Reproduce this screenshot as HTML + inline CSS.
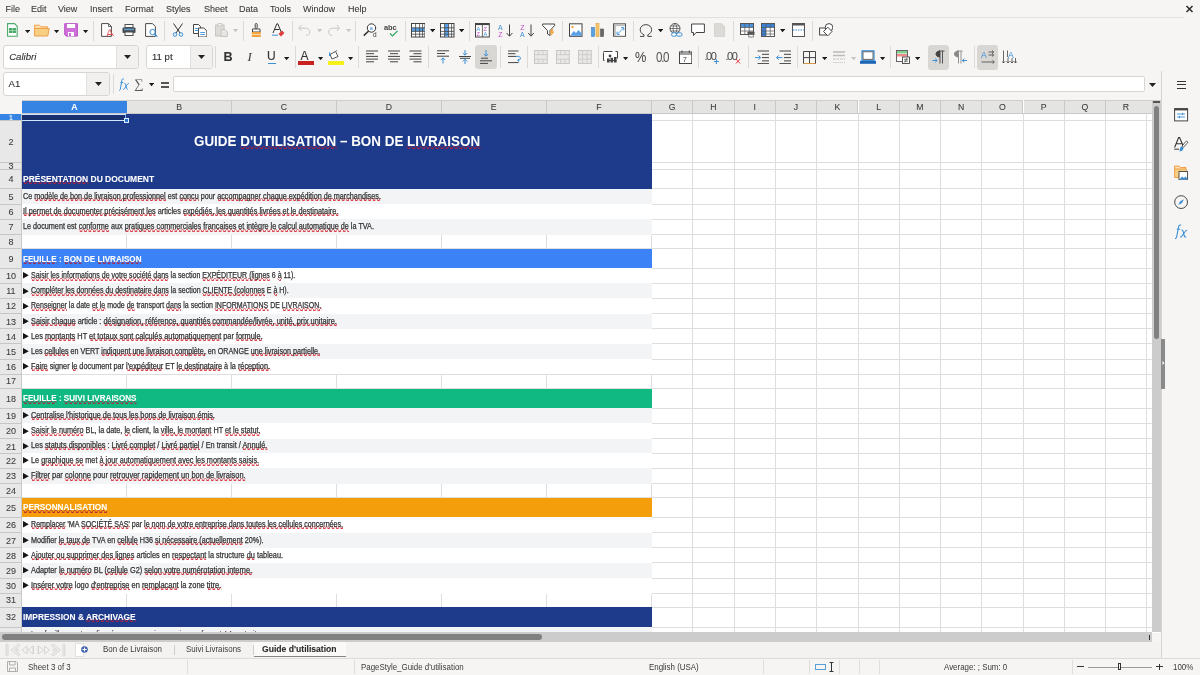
<!DOCTYPE html><html><head><meta charset="utf-8"><style>
*{margin:0;padding:0;box-sizing:border-box}
html,body{width:1200px;height:675px;overflow:hidden;background:#f6f5f4;font-family:"Liberation Sans", sans-serif;position:relative;-webkit-text-stroke-width:0.08px}
.ui{position:absolute;font-size:8.8px;color:#3a3a3a;line-height:12px;white-space:nowrap;transform:scaleX(0.9);transform-origin:0 0;-webkit-text-stroke-width:0}
.a{position:absolute}
.t{position:absolute;white-space:nowrap;transform-origin:0 50%}
.sp{background-image:linear-gradient(50.2deg,transparent 1.42px,rgba(215,45,55,.8) 1.42px,rgba(215,45,55,.8) 2.42px,transparent 2.42px),linear-gradient(129.8deg,transparent 3.34px,rgba(215,45,55,.8) 3.34px,rgba(215,45,55,.8) 4.34px,transparent 4.34px);background-size:5px 3px;background-position:0 100%;background-repeat:repeat-x;padding-bottom:0.3px}
.sec .sp,#title .sp{background-image:linear-gradient(50.2deg,transparent 1.42px,rgba(180,30,60,.75) 1.42px,rgba(180,30,60,.75) 2.42px,transparent 2.42px),linear-gradient(129.8deg,transparent 3.34px,rgba(180,30,60,.75) 3.34px,rgba(180,30,60,.75) 4.34px,transparent 4.34px)}
#root{position:absolute;left:0;top:0;width:1200px;height:675px;filter:blur(0.4px);will-change:transform}
.menu{position:absolute;top:2px;font-size:9px;color:#3a3a3a;line-height:14px}
.sep{position:absolute;width:1px;background:#dcdad7}
.hd{position:absolute;top:100.2px;height:13.6px;background:#e4e4e3;border-right:1px solid #c8c8c8;border-top:1px solid #cdcdcc;font-size:8.7px;color:#3c3c3c;text-align:center;line-height:13.4px}
.rhd{position:absolute;left:0;width:21.9px;background:#e8e8e8;font-size:9px;color:#3c3c3c;text-align:center}
</style></head><body><div id="root">
<div class="menu" style="left:5.6px">File</div>
<div class="menu" style="left:31px">Edit</div>
<div class="menu" style="left:58px">View</div>
<div class="menu" style="left:90px">Insert</div>
<div class="menu" style="left:125px">Format</div>
<div class="menu" style="left:166px">Styles</div>
<div class="menu" style="left:204px">Sheet</div>
<div class="menu" style="left:239px">Data</div>
<div class="menu" style="left:270px">Tools</div>
<div class="menu" style="left:303px">Window</div>
<div class="menu" style="left:348px">Help</div>
<div class="a" style="left:0;top:16.5px;width:1184px;height:1px;background:#e3e1de"></div>
<svg class="a" style="left:1185px;top:4.5px" width="9" height="8" viewBox="0 0 9 8"><path d="M1.5 1L7.5 7M7.5 1L1.5 7" stroke="#2a2a2a" stroke-width="1.5"/></svg>
<div class="a" style="left:0;top:96px;width:1161.4px;height:536.5px;background:#ffffff"></div>
<div class="a" style="left:0;top:96px;width:1161.4px;height:4.2px;background:#f6f5f4"></div>
<div class="a" style="left:0;top:100.2px;width:21.9px;height:13.6px;background:#f6f5f4"></div>
<div class="a" style="left:21.40px;top:113.8px;width:1px;height:518.7px;background:#dedede"></div>
<div class="a" style="left:126.30px;top:113.8px;width:1px;height:518.7px;background:#dedede"></div>
<div class="a" style="left:231.10px;top:113.8px;width:1px;height:518.7px;background:#dedede"></div>
<div class="a" style="left:335.90px;top:113.8px;width:1px;height:518.7px;background:#dedede"></div>
<div class="a" style="left:440.80px;top:113.8px;width:1px;height:518.7px;background:#dedede"></div>
<div class="a" style="left:545.70px;top:113.8px;width:1px;height:518.7px;background:#dedede"></div>
<div class="a" style="left:650.90px;top:113.8px;width:1px;height:518.7px;background:#dedede"></div>
<div class="a" style="left:692.30px;top:113.8px;width:1px;height:518.7px;background:#dedede"></div>
<div class="a" style="left:733.60px;top:113.8px;width:1px;height:518.7px;background:#dedede"></div>
<div class="a" style="left:774.90px;top:113.8px;width:1px;height:518.7px;background:#dedede"></div>
<div class="a" style="left:816.20px;top:113.8px;width:1px;height:518.7px;background:#dedede"></div>
<div class="a" style="left:857.50px;top:113.8px;width:1px;height:518.7px;background:#dedede"></div>
<div class="a" style="left:898.80px;top:113.8px;width:1px;height:518.7px;background:#dedede"></div>
<div class="a" style="left:940.00px;top:113.8px;width:1px;height:518.7px;background:#dedede"></div>
<div class="a" style="left:981.30px;top:113.8px;width:1px;height:518.7px;background:#dedede"></div>
<div class="a" style="left:1022.50px;top:113.8px;width:1px;height:518.7px;background:#dedede"></div>
<div class="a" style="left:1063.70px;top:113.8px;width:1px;height:518.7px;background:#dedede"></div>
<div class="a" style="left:1105.00px;top:113.8px;width:1px;height:518.7px;background:#dedede"></div>
<div class="a" style="left:1146.00px;top:113.8px;width:1px;height:518.7px;background:#dedede"></div>
<div class="a" style="left:21.9px;top:120.10px;width:1130.1px;height:1px;background:#dedede"></div>
<div class="a" style="left:21.9px;top:162.10px;width:1130.1px;height:1px;background:#dedede"></div>
<div class="a" style="left:21.9px;top:168.80px;width:1130.1px;height:1px;background:#dedede"></div>
<div class="a" style="left:21.9px;top:188.40px;width:1130.1px;height:1px;background:#dedede"></div>
<div class="a" style="left:21.9px;top:203.70px;width:1130.1px;height:1px;background:#dedede"></div>
<div class="a" style="left:21.9px;top:218.80px;width:1130.1px;height:1px;background:#dedede"></div>
<div class="a" style="left:21.9px;top:234.20px;width:1130.1px;height:1px;background:#dedede"></div>
<div class="a" style="left:21.9px;top:248.20px;width:1130.1px;height:1px;background:#dedede"></div>
<div class="a" style="left:21.9px;top:267.80px;width:1130.1px;height:1px;background:#dedede"></div>
<div class="a" style="left:21.9px;top:282.90px;width:1130.1px;height:1px;background:#dedede"></div>
<div class="a" style="left:21.9px;top:297.90px;width:1130.1px;height:1px;background:#dedede"></div>
<div class="a" style="left:21.9px;top:313.00px;width:1130.1px;height:1px;background:#dedede"></div>
<div class="a" style="left:21.9px;top:328.00px;width:1130.1px;height:1px;background:#dedede"></div>
<div class="a" style="left:21.9px;top:343.30px;width:1130.1px;height:1px;background:#dedede"></div>
<div class="a" style="left:21.9px;top:358.60px;width:1130.1px;height:1px;background:#dedede"></div>
<div class="a" style="left:21.9px;top:373.60px;width:1130.1px;height:1px;background:#dedede"></div>
<div class="a" style="left:21.9px;top:388.00px;width:1130.1px;height:1px;background:#dedede"></div>
<div class="a" style="left:21.9px;top:407.70px;width:1130.1px;height:1px;background:#dedede"></div>
<div class="a" style="left:21.9px;top:422.80px;width:1130.1px;height:1px;background:#dedede"></div>
<div class="a" style="left:21.9px;top:438.00px;width:1130.1px;height:1px;background:#dedede"></div>
<div class="a" style="left:21.9px;top:452.80px;width:1130.1px;height:1px;background:#dedede"></div>
<div class="a" style="left:21.9px;top:467.90px;width:1130.1px;height:1px;background:#dedede"></div>
<div class="a" style="left:21.9px;top:483.10px;width:1130.1px;height:1px;background:#dedede"></div>
<div class="a" style="left:21.9px;top:497.00px;width:1130.1px;height:1px;background:#dedede"></div>
<div class="a" style="left:21.9px;top:516.70px;width:1130.1px;height:1px;background:#dedede"></div>
<div class="a" style="left:21.9px;top:532.00px;width:1130.1px;height:1px;background:#dedede"></div>
<div class="a" style="left:21.9px;top:547.10px;width:1130.1px;height:1px;background:#dedede"></div>
<div class="a" style="left:21.9px;top:562.30px;width:1130.1px;height:1px;background:#dedede"></div>
<div class="a" style="left:21.9px;top:577.50px;width:1130.1px;height:1px;background:#dedede"></div>
<div class="a" style="left:21.9px;top:592.70px;width:1130.1px;height:1px;background:#dedede"></div>
<div class="a" style="left:21.9px;top:606.90px;width:1130.1px;height:1px;background:#dedede"></div>
<div class="a" style="left:21.9px;top:626.70px;width:1130.1px;height:1px;background:#dedede"></div>
<div class="a" style="left:21.9px;top:641.80px;width:1130.1px;height:1px;background:#dedede"></div>
<div class="a" style="left:21.9px;top:113.60px;width:630.10px;height:7.30px;background:#1e3a8a"></div>
<div class="a" style="left:21.9px;top:120.60px;width:630.10px;height:42.30px;background:#1e3a8a"></div>
<div class="a" style="left:21.9px;top:162.60px;width:630.10px;height:7.00px;background:#1e3a8a"></div>
<div class="a" style="left:21.9px;top:169.30px;width:630.10px;height:19.90px;background:#1e3a8a"></div>
<div class="a" style="left:21.9px;top:248.70px;width:630.10px;height:19.90px;background:#3b82f6"></div>
<div class="a" style="left:21.9px;top:388.50px;width:630.10px;height:20.00px;background:#10b981"></div>
<div class="a" style="left:21.9px;top:497.50px;width:630.10px;height:20.00px;background:#f59e0b"></div>
<div class="a" style="left:21.9px;top:607.40px;width:630.10px;height:20.10px;background:#1e3a8a"></div>
<div class="a" style="left:21.9px;top:188.90px;width:630.10px;height:15.60px;background:#f3f4f6"></div>
<div class="a" style="left:21.9px;top:204.20px;width:630.10px;height:15.40px;background:#ffffff"></div>
<div class="a" style="left:21.9px;top:219.30px;width:630.10px;height:15.70px;background:#f3f4f6"></div>
<div class="a" style="left:21.9px;top:268.30px;width:630.10px;height:15.40px;background:#ffffff"></div>
<div class="a" style="left:21.9px;top:283.40px;width:630.10px;height:15.30px;background:#f3f4f6"></div>
<div class="a" style="left:21.9px;top:298.40px;width:630.10px;height:15.40px;background:#ffffff"></div>
<div class="a" style="left:21.9px;top:313.50px;width:630.10px;height:15.30px;background:#f3f4f6"></div>
<div class="a" style="left:21.9px;top:328.50px;width:630.10px;height:15.60px;background:#ffffff"></div>
<div class="a" style="left:21.9px;top:343.80px;width:630.10px;height:15.60px;background:#f3f4f6"></div>
<div class="a" style="left:21.9px;top:359.10px;width:630.10px;height:15.30px;background:#ffffff"></div>
<div class="a" style="left:21.9px;top:408.20px;width:630.10px;height:15.40px;background:#f3f4f6"></div>
<div class="a" style="left:21.9px;top:423.30px;width:630.10px;height:15.50px;background:#ffffff"></div>
<div class="a" style="left:21.9px;top:438.50px;width:630.10px;height:15.10px;background:#f3f4f6"></div>
<div class="a" style="left:21.9px;top:453.30px;width:630.10px;height:15.40px;background:#ffffff"></div>
<div class="a" style="left:21.9px;top:468.40px;width:630.10px;height:15.50px;background:#f3f4f6"></div>
<div class="a" style="left:21.9px;top:517.20px;width:630.10px;height:15.60px;background:#ffffff"></div>
<div class="a" style="left:21.9px;top:532.50px;width:630.10px;height:15.40px;background:#f3f4f6"></div>
<div class="a" style="left:21.9px;top:547.60px;width:630.10px;height:15.50px;background:#ffffff"></div>
<div class="a" style="left:21.9px;top:562.80px;width:630.10px;height:15.50px;background:#f3f4f6"></div>
<div class="a" style="left:21.9px;top:578.00px;width:630.10px;height:15.50px;background:#ffffff"></div>
<div class="a" style="left:21.9px;top:627.20px;width:630.10px;height:15.40px;background:#f3f4f6"></div>
<div class="hd" style="left:21.9px;width:104.90px;background:#3584e4;color:#fff;font-weight:bold;border-right:none">A</div>
<div class="hd" style="left:127.30px;width:104.80px">B</div>
<div class="hd" style="left:232.10px;width:104.80px">C</div>
<div class="hd" style="left:336.90px;width:104.90px">D</div>
<div class="hd" style="left:441.80px;width:104.90px">E</div>
<div class="hd" style="left:546.70px;width:105.20px">F</div>
<div class="hd" style="left:651.90px;width:41.40px">G</div>
<div class="hd" style="left:693.30px;width:41.30px">H</div>
<div class="hd" style="left:734.60px;width:41.30px">I</div>
<div class="hd" style="left:775.90px;width:41.30px">J</div>
<div class="hd" style="left:817.20px;width:41.30px">K</div>
<div class="hd" style="left:858.50px;width:41.30px">L</div>
<div class="hd" style="left:899.80px;width:41.20px">M</div>
<div class="hd" style="left:941.00px;width:41.30px">N</div>
<div class="hd" style="left:982.30px;width:41.20px">O</div>
<div class="hd" style="left:1023.50px;width:41.20px">P</div>
<div class="hd" style="left:1064.70px;width:41.30px">Q</div>
<div class="hd" style="left:1106.00px;width:41.00px">R</div>
<div class="hd" style="left:1146px;width:6px;border-right:none"></div>
<div class="a" style="left:21.9px;top:113.3px;width:1130px;height:0.6px;background:#c8c8c8"></div>
<div class="rhd" style="top:113.60px;height:7.00px;background:#3584e4;color:#fff;line-height:7.0px;font-size:7px;border-bottom:none">1</div>
<div class="rhd" style="top:120.60px;height:42.00px;line-height:43.20px">2</div>
<div class="a" style="left:0;top:120.10px;width:21.9px;height:1px;background:#c6c6c6"></div>
<div class="rhd" style="top:162.60px;height:6.70px;line-height:7.90px">3</div>
<div class="a" style="left:0;top:162.10px;width:21.9px;height:1px;background:#c6c6c6"></div>
<div class="rhd" style="top:169.30px;height:19.60px;line-height:20.80px">4</div>
<div class="a" style="left:0;top:168.80px;width:21.9px;height:1px;background:#c6c6c6"></div>
<div class="rhd" style="top:188.90px;height:15.30px;line-height:16.50px">5</div>
<div class="a" style="left:0;top:188.40px;width:21.9px;height:1px;background:#c6c6c6"></div>
<div class="rhd" style="top:204.20px;height:15.10px;line-height:16.30px">6</div>
<div class="a" style="left:0;top:203.70px;width:21.9px;height:1px;background:#c6c6c6"></div>
<div class="rhd" style="top:219.30px;height:15.40px;line-height:16.60px">7</div>
<div class="a" style="left:0;top:218.80px;width:21.9px;height:1px;background:#c6c6c6"></div>
<div class="rhd" style="top:234.70px;height:14.00px;line-height:15.20px">8</div>
<div class="a" style="left:0;top:234.20px;width:21.9px;height:1px;background:#c6c6c6"></div>
<div class="rhd" style="top:248.70px;height:19.60px;line-height:20.80px">9</div>
<div class="a" style="left:0;top:248.20px;width:21.9px;height:1px;background:#c6c6c6"></div>
<div class="rhd" style="top:268.30px;height:15.10px;line-height:16.30px">10</div>
<div class="a" style="left:0;top:267.80px;width:21.9px;height:1px;background:#c6c6c6"></div>
<div class="rhd" style="top:283.40px;height:15.00px;line-height:16.20px">11</div>
<div class="a" style="left:0;top:282.90px;width:21.9px;height:1px;background:#c6c6c6"></div>
<div class="rhd" style="top:298.40px;height:15.10px;line-height:16.30px">12</div>
<div class="a" style="left:0;top:297.90px;width:21.9px;height:1px;background:#c6c6c6"></div>
<div class="rhd" style="top:313.50px;height:15.00px;line-height:16.20px">13</div>
<div class="a" style="left:0;top:313.00px;width:21.9px;height:1px;background:#c6c6c6"></div>
<div class="rhd" style="top:328.50px;height:15.30px;line-height:16.50px">14</div>
<div class="a" style="left:0;top:328.00px;width:21.9px;height:1px;background:#c6c6c6"></div>
<div class="rhd" style="top:343.80px;height:15.30px;line-height:16.50px">15</div>
<div class="a" style="left:0;top:343.30px;width:21.9px;height:1px;background:#c6c6c6"></div>
<div class="rhd" style="top:359.10px;height:15.00px;line-height:16.20px">16</div>
<div class="a" style="left:0;top:358.60px;width:21.9px;height:1px;background:#c6c6c6"></div>
<div class="rhd" style="top:374.10px;height:14.40px;line-height:15.60px">17</div>
<div class="a" style="left:0;top:373.60px;width:21.9px;height:1px;background:#c6c6c6"></div>
<div class="rhd" style="top:388.50px;height:19.70px;line-height:20.90px">18</div>
<div class="a" style="left:0;top:388.00px;width:21.9px;height:1px;background:#c6c6c6"></div>
<div class="rhd" style="top:408.20px;height:15.10px;line-height:16.30px">19</div>
<div class="a" style="left:0;top:407.70px;width:21.9px;height:1px;background:#c6c6c6"></div>
<div class="rhd" style="top:423.30px;height:15.20px;line-height:16.40px">20</div>
<div class="a" style="left:0;top:422.80px;width:21.9px;height:1px;background:#c6c6c6"></div>
<div class="rhd" style="top:438.50px;height:14.80px;line-height:16.00px">21</div>
<div class="a" style="left:0;top:438.00px;width:21.9px;height:1px;background:#c6c6c6"></div>
<div class="rhd" style="top:453.30px;height:15.10px;line-height:16.30px">22</div>
<div class="a" style="left:0;top:452.80px;width:21.9px;height:1px;background:#c6c6c6"></div>
<div class="rhd" style="top:468.40px;height:15.20px;line-height:16.40px">23</div>
<div class="a" style="left:0;top:467.90px;width:21.9px;height:1px;background:#c6c6c6"></div>
<div class="rhd" style="top:483.60px;height:13.90px;line-height:15.10px">24</div>
<div class="a" style="left:0;top:483.10px;width:21.9px;height:1px;background:#c6c6c6"></div>
<div class="rhd" style="top:497.50px;height:19.70px;line-height:20.90px">25</div>
<div class="a" style="left:0;top:497.00px;width:21.9px;height:1px;background:#c6c6c6"></div>
<div class="rhd" style="top:517.20px;height:15.30px;line-height:16.50px">26</div>
<div class="a" style="left:0;top:516.70px;width:21.9px;height:1px;background:#c6c6c6"></div>
<div class="rhd" style="top:532.50px;height:15.10px;line-height:16.30px">27</div>
<div class="a" style="left:0;top:532.00px;width:21.9px;height:1px;background:#c6c6c6"></div>
<div class="rhd" style="top:547.60px;height:15.20px;line-height:16.40px">28</div>
<div class="a" style="left:0;top:547.10px;width:21.9px;height:1px;background:#c6c6c6"></div>
<div class="rhd" style="top:562.80px;height:15.20px;line-height:16.40px">29</div>
<div class="a" style="left:0;top:562.30px;width:21.9px;height:1px;background:#c6c6c6"></div>
<div class="rhd" style="top:578.00px;height:15.20px;line-height:16.40px">30</div>
<div class="a" style="left:0;top:577.50px;width:21.9px;height:1px;background:#c6c6c6"></div>
<div class="rhd" style="top:593.20px;height:14.20px;line-height:15.40px">31</div>
<div class="a" style="left:0;top:592.70px;width:21.9px;height:1px;background:#c6c6c6"></div>
<div class="rhd" style="top:607.40px;height:19.80px;line-height:21.00px">32</div>
<div class="a" style="left:0;top:606.90px;width:21.9px;height:1px;background:#c6c6c6"></div>
<div class="rhd" style="top:627.20px;height:5.30px;line-height:16.30px">33</div>
<div class="a" style="left:0;top:626.70px;width:21.9px;height:1px;background:#c6c6c6"></div>
<div class="a" style="left:21.4px;top:113.8px;width:0.8px;height:518.7px;background:#c8c8c8"></div>
<div class="a" style="left:21.9px;top:113.9px;width:104px;height:7.4px;border:1.1px solid #cfe6ff;border-bottom-width:1.8px;border-right-color:#7fb0ea"></div>
<div class="a" style="left:21.9px;top:115px;width:103px;height:4.5px;background:#19306f"></div>
<div class="a" style="left:124.2px;top:118.2px;width:4.8px;height:5px;background:#2f6fd0;border:1.2px solid #dcefff"></div>
<div class="t" id="title" style="left:193.9px;top:120.6px;height:42.0px;line-height:41.3px;font-size:14.2px;font-weight:bold;color:#fff;-webkit-text-stroke-width:0;transform:scaleX(0.9452)">GUIDE <span class="sp">D&#39;UTILISATION</span> – BON DE <span class="sp">LIVRAISON</span></div>
<div class="t sec" id="s4" style="left:22.9px;top:170.10px;height:19.60px;line-height:19.60px;font-size:8.7px;font-weight:bold;color:#fff;transform:scaleX(0.9757)"><span class="sp">PRÉSENTATION</span> DU DOCUMENT</div>
<div class="t sec" id="s9" style="left:22.9px;top:249.50px;height:19.60px;line-height:19.60px;font-size:8.7px;font-weight:bold;color:#fff;transform:scaleX(0.9296)"><span class="sp">FEUILLE</span> : <span class="sp">BON</span> DE <span class="sp">LIVRAISON</span></div>
<div class="t sec" id="s18" style="left:22.7px;top:389.30px;height:19.70px;line-height:19.70px;font-size:8.7px;font-weight:bold;color:#fff;transform:scaleX(0.9293)"><span class="sp">FEUILLE</span> : <span class="sp">SUIVI LIVRAISONS</span></div>
<div class="t sec" id="s25" style="left:22.9px;top:498.30px;height:19.70px;line-height:19.70px;font-size:8.7px;font-weight:bold;color:#fff;transform:scaleX(0.9435)"><span class="sp">PERSONNALISATION</span></div>
<div class="t sec" id="s32" style="left:22.9px;top:608.20px;height:19.80px;line-height:19.80px;font-size:8.7px;font-weight:bold;color:#fff;transform:scaleX(0.9639)">IMPRESSION &amp; <span class="sp">ARCHIVAGE</span></div>
<div class="t" id="r5" style="left:23.0px;top:188.90px;height:15.30px;line-height:15.30px;font-size:8.2px;color:#333333;-webkit-text-stroke-width:0.25px;transform:scaleX(0.8832)">Ce <span class="sp">modèle de bon de livraison professionnel</span> est <span class="sp">concu</span> pour <span class="sp">accompagner chaque expédition de marchandises.</span></div>
<div class="t" id="r6" style="left:23.0px;top:204.20px;height:15.10px;line-height:15.10px;font-size:8.2px;color:#333333;-webkit-text-stroke-width:0.25px;transform:scaleX(0.894)"><span class="sp">Il permet de documenter précisément les</span> articles <span class="sp">expédiés, les quantités livrées et le destinataire.</span></div>
<div class="t" id="r7" style="left:23.0px;top:219.30px;height:15.40px;line-height:15.40px;font-size:8.2px;color:#333333;-webkit-text-stroke-width:0.25px;transform:scaleX(0.886)">Le document est <span class="sp">conforme</span> aux <span class="sp">pratiques commerciales francaises et intègre le calcul automatique de</span> la TVA.</div>
<svg class="a" style="left:22.8px;top:272.45px" width="6" height="6.4" viewBox="0 0 6 6.4"><path d="M0 0L5.8 3.2L0 6.4Z" fill="#151515"/></svg>
<div class="t" id="r10" style="left:30.6px;top:268.30px;height:15.10px;line-height:15.10px;font-size:8.2px;color:#333333;-webkit-text-stroke-width:0.25px;transform:scaleX(0.8591)"><span class="sp">Saisir les informations de votre société dans</span> la section <span class="sp">EXPÉDITEUR (lignes</span> 6 <span class="sp">à</span> 11).</div>
<svg class="a" style="left:22.8px;top:287.50px" width="6" height="6.4" viewBox="0 0 6 6.4"><path d="M0 0L5.8 3.2L0 6.4Z" fill="#151515"/></svg>
<div class="t" id="r11" style="left:30.6px;top:283.40px;height:15.00px;line-height:15.00px;font-size:8.2px;color:#333333;-webkit-text-stroke-width:0.25px;transform:scaleX(0.8604)"><span class="sp">Compléter les données du destinataire dans</span> la section <span class="sp">CLIENTE (colonnes</span> E <span class="sp">à</span> H).</div>
<svg class="a" style="left:22.8px;top:302.55px" width="6" height="6.4" viewBox="0 0 6 6.4"><path d="M0 0L5.8 3.2L0 6.4Z" fill="#151515"/></svg>
<div class="t" id="r12" style="left:30.6px;top:298.40px;height:15.10px;line-height:15.10px;font-size:8.2px;color:#333333;-webkit-text-stroke-width:0.25px;transform:scaleX(0.8576)"><span class="sp">Renseigner</span> la date <span class="sp">et le</span> mode <span class="sp">de</span> transport <span class="sp">dans</span> la section <span class="sp">INFORMATIONS</span> DE <span class="sp">LIVRAISON.</span></div>
<svg class="a" style="left:22.8px;top:317.60px" width="6" height="6.4" viewBox="0 0 6 6.4"><path d="M0 0L5.8 3.2L0 6.4Z" fill="#151515"/></svg>
<div class="t" id="r13" style="left:30.6px;top:313.50px;height:15.00px;line-height:15.00px;font-size:8.2px;color:#333333;-webkit-text-stroke-width:0.25px;transform:scaleX(0.8995)"><span class="sp">Saisir chaque</span> article : <span class="sp">désignation, référence, quantités commandée/livrée, unité, prix unitaire.</span></div>
<svg class="a" style="left:22.8px;top:332.75px" width="6" height="6.4" viewBox="0 0 6 6.4"><path d="M0 0L5.8 3.2L0 6.4Z" fill="#151515"/></svg>
<div class="t" id="r14" style="left:30.6px;top:328.50px;height:15.30px;line-height:15.30px;font-size:8.2px;color:#333333;-webkit-text-stroke-width:0.25px;transform:scaleX(0.9011)">Les <span class="sp">montants</span> HT <span class="sp">et totaux sont calculés automatiquement</span> par <span class="sp">formule.</span></div>
<svg class="a" style="left:22.8px;top:348.05px" width="6" height="6.4" viewBox="0 0 6 6.4"><path d="M0 0L5.8 3.2L0 6.4Z" fill="#151515"/></svg>
<div class="t" id="r15" style="left:30.6px;top:343.80px;height:15.30px;line-height:15.30px;font-size:8.2px;color:#333333;-webkit-text-stroke-width:0.25px;transform:scaleX(0.8756)">Les <span class="sp">cellules</span> en VERT <span class="sp">indiquent une livraison complète,</span> en ORANGE <span class="sp">une livraison partielle.</span></div>
<svg class="a" style="left:22.8px;top:363.20px" width="6" height="6.4" viewBox="0 0 6 6.4"><path d="M0 0L5.8 3.2L0 6.4Z" fill="#151515"/></svg>
<div class="t" id="r16" style="left:30.6px;top:359.10px;height:15.00px;line-height:15.00px;font-size:8.2px;color:#333333;-webkit-text-stroke-width:0.25px;transform:scaleX(0.8927)"><span class="sp">Faire</span> signer <span class="sp">le</span> document par <span class="sp">l&#39;expéditeur</span> ET <span class="sp">le destinataire</span> à la <span class="sp">réception.</span></div>
<svg class="a" style="left:22.8px;top:412.35px" width="6" height="6.4" viewBox="0 0 6 6.4"><path d="M0 0L5.8 3.2L0 6.4Z" fill="#151515"/></svg>
<div class="t" id="r19" style="left:30.6px;top:408.20px;height:15.10px;line-height:15.10px;font-size:8.2px;color:#333333;-webkit-text-stroke-width:0.25px;transform:scaleX(0.8951)"><span class="sp">Centralise l&#39;historique de tous les bons de livraison émis.</span></div>
<svg class="a" style="left:22.8px;top:427.50px" width="6" height="6.4" viewBox="0 0 6 6.4"><path d="M0 0L5.8 3.2L0 6.4Z" fill="#151515"/></svg>
<div class="t" id="r20" style="left:30.6px;top:423.30px;height:15.20px;line-height:15.20px;font-size:8.2px;color:#333333;-webkit-text-stroke-width:0.25px;transform:scaleX(0.8886)"><span class="sp">Saisir le numéro</span> BL, la date, <span class="sp">le</span> client, la <span class="sp">ville, le montant</span> HT <span class="sp">et le statut.</span></div>
<svg class="a" style="left:22.8px;top:442.50px" width="6" height="6.4" viewBox="0 0 6 6.4"><path d="M0 0L5.8 3.2L0 6.4Z" fill="#151515"/></svg>
<div class="t" id="r21" style="left:30.6px;top:438.50px;height:14.80px;line-height:14.80px;font-size:8.2px;color:#333333;-webkit-text-stroke-width:0.25px;transform:scaleX(0.8985)">Les <span class="sp">statuts disponibles</span> : <span class="sp">Livré complet</span> / <span class="sp">Livré partiel</span> / En transit / <span class="sp">Annulé.</span></div>
<svg class="a" style="left:22.8px;top:457.45px" width="6" height="6.4" viewBox="0 0 6 6.4"><path d="M0 0L5.8 3.2L0 6.4Z" fill="#151515"/></svg>
<div class="t" id="r22" style="left:30.6px;top:453.30px;height:15.10px;line-height:15.10px;font-size:8.2px;color:#333333;-webkit-text-stroke-width:0.25px;transform:scaleX(0.8901)">Le <span class="sp">graphique se</span> met <span class="sp">à jour automatiquement avec les montants saisis.</span></div>
<svg class="a" style="left:22.8px;top:472.60px" width="6" height="6.4" viewBox="0 0 6 6.4"><path d="M0 0L5.8 3.2L0 6.4Z" fill="#151515"/></svg>
<div class="t" id="r23" style="left:30.6px;top:468.40px;height:15.20px;line-height:15.20px;font-size:8.2px;color:#333333;-webkit-text-stroke-width:0.25px;transform:scaleX(0.9085)"><span class="sp">Filtrer</span> par <span class="sp">colonne</span> pour <span class="sp">retrouver rapidement un bon de livraison.</span></div>
<svg class="a" style="left:22.8px;top:521.45px" width="6" height="6.4" viewBox="0 0 6 6.4"><path d="M0 0L5.8 3.2L0 6.4Z" fill="#151515"/></svg>
<div class="t" id="r26" style="left:30.6px;top:517.20px;height:15.30px;line-height:15.30px;font-size:8.2px;color:#333333;-webkit-text-stroke-width:0.25px;transform:scaleX(0.8692)"><span class="sp">Remplacer</span> &#39;MA <span class="sp">SOCIÉTÉ SAS&#39;</span> par <span class="sp">le nom de votre entreprise dans toutes les cellules concernées.</span></div>
<svg class="a" style="left:22.8px;top:536.65px" width="6" height="6.4" viewBox="0 0 6 6.4"><path d="M0 0L5.8 3.2L0 6.4Z" fill="#151515"/></svg>
<div class="t" id="r27" style="left:30.6px;top:532.50px;height:15.10px;line-height:15.10px;font-size:8.2px;color:#333333;-webkit-text-stroke-width:0.25px;transform:scaleX(0.8835)">Modifier <span class="sp">le taux de</span> TVA en <span class="sp">cellule</span> H36 <span class="sp">si nécessaire (actuellement</span> 20%).</div>
<svg class="a" style="left:22.8px;top:551.80px" width="6" height="6.4" viewBox="0 0 6 6.4"><path d="M0 0L5.8 3.2L0 6.4Z" fill="#151515"/></svg>
<div class="t" id="r28" style="left:30.6px;top:547.60px;height:15.20px;line-height:15.20px;font-size:8.2px;color:#333333;-webkit-text-stroke-width:0.25px;transform:scaleX(0.8976)"><span class="sp">Ajouter ou supprimer des lignes</span> articles en <span class="sp">respectant</span> la structure <span class="sp">du</span> tableau.</div>
<svg class="a" style="left:22.8px;top:567.00px" width="6" height="6.4" viewBox="0 0 6 6.4"><path d="M0 0L5.8 3.2L0 6.4Z" fill="#151515"/></svg>
<div class="t" id="r29" style="left:30.6px;top:562.80px;height:15.20px;line-height:15.20px;font-size:8.2px;color:#333333;-webkit-text-stroke-width:0.25px;transform:scaleX(0.9006)">Adapter <span class="sp">le numéro</span> BL <span class="sp">(cellule</span> G2) <span class="sp">selon votre numérotation interne.</span></div>
<svg class="a" style="left:22.8px;top:582.20px" width="6" height="6.4" viewBox="0 0 6 6.4"><path d="M0 0L5.8 3.2L0 6.4Z" fill="#151515"/></svg>
<div class="t" id="r30" style="left:30.6px;top:578.00px;height:15.20px;line-height:15.20px;font-size:8.2px;color:#333333;-webkit-text-stroke-width:0.25px;transform:scaleX(0.9074)"><span class="sp">Insérer votre</span> logo <span class="sp">d&#39;entreprise</span> en <span class="sp">remplacant</span> la zone <span class="sp">titre.</span></div>
<div class="a" style="left:22px;top:627.2px;width:400px;height:4.8px;overflow:hidden"><div class="t" style="left:8.6px;top:0;height:15px;line-height:15px;font-size:8.2px;color:#333;transform:scaleX(0.88)">Les feuilles sont configurées pour une impression au format A4 portrait.</div></div>
<div class="a" style="left:1152px;top:100.2px;width:9.4px;height:531.5px;background:#cccccc"></div>
<div class="a" style="left:1153px;top:101px;width:7px;height:2px;background:#555"></div>
<div class="a" style="left:1153.6px;top:105.6px;width:5.6px;height:233px;background:#808080;border-radius:3px"></div>
<div class="a" style="left:0;top:632.3px;width:1151.5px;height:9.4px;background:#cccccc"></div>
<div class="a" style="left:2px;top:634px;width:539.7px;height:6px;background:#808080;border-radius:3px"></div>
<div class="a" style="left:1149.2px;top:635px;width:1px;height:4.5px;background:#333"></div>
<div class="a" style="left:0;top:641.7px;width:1161.4px;height:16.8px;background:#f3f2f0"></div>
<div class="a" style="left:1161.4px;top:71px;width:38.6px;height:587.5px;background:#f6f5f4"></div>
<div class="a" style="left:1161.2px;top:71px;width:0.8px;height:587.5px;background:#d6d4d1"></div>
<div class="a" style="left:1161px;top:339px;width:4px;height:49.5px;background:#8a8a8a"></div>
<svg class="a" style="left:1161.5px;top:361px" width="3" height="4"><path d="M0.5 0L2.5 2L0.5 4Z" fill="#fff"/></svg>
<svg class="a" style="left:5px;top:643px" width="63" height="14" viewBox="0 0 63 14"><g fill="none" stroke="#d3d1ce" stroke-width="0.9"><rect x="1.2" y="1" width="1.8" height="12" rx="0.9"/><path d="M13.5 1.2L6 7L13.5 12.8L15 11.6L9 7L15 2.4Z"/><circle cx="12.5" cy="7" r="0.9"/><path d="M22 3L17 7L22 11ZM28 3L23 7L28 11ZM28.5 3V11"/><path d="M33.5 3L38.5 7L33.5 11ZM39.5 3L44.5 7L39.5 11ZM33 3V11"/><path d="M48 1.2L55.5 7L48 12.8L46.5 11.6L52.5 7L46.5 2.4Z"/><circle cx="49" cy="7" r="0.9"/><rect x="58" y="1" width="1.8" height="12" rx="0.9"/></g></svg>
<div class="a" style="left:75px;top:643px;width:9.2px;height:14.2px;background:#fff;border:0.5px solid #e3e1de"></div>
<svg class="a" style="left:81.2px;top:645.6px" width="7" height="7" viewBox="0 0 7 7"><circle cx="3.5" cy="3.5" r="3.3" fill="#3f64ad"/><path d="M3.5 1.4V5.6M1.4 3.5H5.6" stroke="#fff" stroke-width="1.1"/></svg>
<div class="ui" style="left:103px;top:643.3px" id="tab1">Bon de Livraison</div>
<div class="a" style="left:174.2px;top:645px;width:0.8px;height:10px;background:#cfcdca"></div>
<div class="ui" style="left:186px;top:643.3px" id="tab2">Suivi Livraisons</div>
<div class="a" style="left:253.4px;top:645px;width:0.8px;height:10px;background:#cfcdca"></div>
<div class="a" style="left:254px;top:641.7px;width:92px;height:16px;background:#faf9f8"></div>
<div class="a" style="left:262px;top:643px;font-size:8.6px;font-weight:bold;color:#2a2a2a;line-height:12px" id="tab3">Guide d&#39;utilisation</div>
<div class="a" style="left:254px;top:655.6px;width:92px;height:1.8px;background:#858585"></div>
<div class="a" style="left:0;top:658.4px;width:1200px;height:0.8px;background:#dcdad7"></div>
<svg class="a" style="left:6.7px;top:661px" width="11" height="11" viewBox="0 0 11 11"><g fill="none" stroke="#b0aeab" stroke-width="1"><path d="M0.5 0.5H9L10.5 2V10.5H0.5Z"/><path d="M2.5 0.5V4H8V0.5M2.5 10.5V7H8.5V10.5"/></g></svg>
<div class="ui" style="left:27.5px;top:661.4px">Sheet 3 of 3</div>
<div class="a" style="left:187.3px;top:660px;width:0.8px;height:14px;background:#e0deda"></div>
<div class="a" style="left:354.4px;top:660px;width:0.8px;height:14px;background:#e0deda"></div>
<div class="a" style="left:762.5px;top:660px;width:0.8px;height:14px;background:#e0deda"></div>
<div class="a" style="left:808.75px;top:660px;width:0.8px;height:14px;background:#e0deda"></div>
<div class="a" style="left:838.75px;top:660px;width:0.8px;height:14px;background:#e0deda"></div>
<div class="a" style="left:858.75px;top:660px;width:0.8px;height:14px;background:#e0deda"></div>
<div class="a" style="left:878.75px;top:660px;width:0.8px;height:14px;background:#e0deda"></div>
<div class="a" style="left:1071.5px;top:660px;width:0.8px;height:14px;background:#e0deda"></div>
<div class="ui" style="left:361px;top:661.4px">PageStyle_Guide d&#39;utilisation</div>
<div class="ui" style="left:648.75px;top:661.4px">English (USA)</div>
<div class="a" style="left:815px;top:663.5px;width:11px;height:6px;border:1px solid #5aa0d8"></div>
<svg class="a" style="left:828.5px;top:661.5px" width="5" height="10"><path d="M0.5 0.5H4.5M2.5 0.5V9.5M0.5 9.5H4.5" stroke="#333" stroke-width="1" fill="none"/></svg>
<div class="ui" style="left:944px;top:661.4px">Average: ; Sum: 0</div>
<div class="a" style="left:1077.3px;top:666.3px;width:6.7px;height:1.2px;background:#333"></div>
<div class="a" style="left:1088px;top:666.5px;width:64px;height:0.8px;background:#9a9a9a"></div>
<div class="a" style="left:1118px;top:663px;width:3.3px;height:7px;border:1px solid #333;background:#f6f5f4"></div>
<div class="a" style="left:1156px;top:666.3px;width:6.7px;height:1.2px;background:#333"></div><div class="a" style="left:1158.75px;top:663.5px;width:1.2px;height:6.7px;background:#333"></div>
<div class="ui" style="left:1173.3px;top:661.4px">100%</div>
<svg class="a" style="left:7.1px;top:23px" width="10.8" height="13.8" viewBox="0 0 10.8 13.8" preserveAspectRatio="none"><path d="M0.6 0.6H7.5L10.2 3.3V13.2H0.6Z" fill="#fff" stroke="#4aa86a" stroke-width="1.1"/><rect x="2" y="5" width="7" height="5" fill="#4aa86a"/><path d="M2 7.5H9M5.5 5V10" stroke="#bfe3c9" stroke-width="0.6"/></svg>
<svg class="a" style="left:24.90px;top:29.90px" width="5.2" height="3.2" viewBox="0 0 5.2 3.2"><path d="M0 0H5.2L2.6 3.2Z" fill="#1a1a1a"/></svg>
<svg class="a" style="left:34.2px;top:24.2px" width="15.8" height="12.6" viewBox="0 0 15.8 12.6" preserveAspectRatio="none"><path d="M0.6 1.2H5.5L7 2.8H13.5V4.5H0.6Z" fill="#fbe0a8" stroke="#eea04a" stroke-width="1"/><path d="M0.6 4.5H15.2L13.8 12H0.6Z" fill="#f8cf82" stroke="#eea04a" stroke-width="1"/></svg>
<svg class="a" style="left:54.40px;top:29.90px" width="5.2" height="3.2" viewBox="0 0 5.2 3.2"><path d="M0 0H5.2L2.6 3.2Z" fill="#1a1a1a"/></svg>
<svg class="a" style="left:64.2px;top:23px" width="14.1" height="13.8" viewBox="0 0 14.1 13.8" preserveAspectRatio="none"><path d="M0.7 0.7H13.4V13.1H2.2L0.7 11.6Z" fill="#cf6fda" stroke="#b84fc8" stroke-width="1"/><rect x="3" y="1" width="8" height="4" fill="#fff"/><rect x="4" y="9" width="6" height="4.2" fill="#fff"/><rect x="5.2" y="10" width="1.6" height="3" fill="#b84fc8"/></svg>
<svg class="a" style="left:83.40px;top:29.90px" width="5.2" height="3.2" viewBox="0 0 5.2 3.2"><path d="M0 0H5.2L2.6 3.2Z" fill="#1a1a1a"/></svg>
<div class="sep" style="left:92.90px;top:21px;height:20px"></div>
<svg class="a" style="left:101px;top:23px" width="13" height="14" viewBox="0 0 13 14" preserveAspectRatio="none"><path d="M0.6 0.6H7.5L10.4 3.5V13.4H0.6Z" fill="#fff" stroke="#4a4a4a" stroke-width="1"/><path d="M7.5 0.6V3.5H10.4" fill="none" stroke="#4a4a4a" stroke-width="0.8"/><path d="M6 13.5C7 9 8.5 7 9 6.5C9.5 8 10 10 12.6 13M7 11.5H12" stroke="#e04040" stroke-width="0.9" fill="none"/></svg>
<svg class="a" style="left:122px;top:24px" width="14" height="12" viewBox="0 0 14 12" preserveAspectRatio="none"><rect x="3" y="0.5" width="8" height="3" fill="#fff" stroke="#505050" stroke-width="1"/><rect x="0.5" y="3.5" width="13" height="5.5" rx="1" fill="#4a4a4a"/><rect x="2" y="4.6" width="10" height="1.6" fill="#5a9fd4"/><rect x="3" y="8" width="8" height="3.5" fill="#fff" stroke="#505050" stroke-width="1"/></svg>
<svg class="a" style="left:145px;top:23px" width="13" height="14" viewBox="0 0 13 14" preserveAspectRatio="none"><path d="M0.6 0.6H7.5L10.4 3.5V13.4H0.6Z" fill="#fff" stroke="#4a4a4a" stroke-width="1"/><circle cx="7.6" cy="9" r="2.7" fill="none" stroke="#3b8fd6" stroke-width="1"/><path d="M9.5 11L12.4 13.6" stroke="#3b8fd6" stroke-width="1.2"/></svg>
<div class="sep" style="left:164.10px;top:21px;height:20px"></div>
<svg class="a" style="left:172px;top:23px" width="12" height="14" viewBox="0 0 12 14" preserveAspectRatio="none"><path d="M1.5 0.5L8 10M10.5 0.5L4 10" stroke="#333" stroke-width="1"/><circle cx="3" cy="11.5" r="1.8" fill="none" stroke="#3b8fd6" stroke-width="1"/><circle cx="9" cy="11.5" r="1.8" fill="none" stroke="#3b8fd6" stroke-width="1"/></svg>
<svg class="a" style="left:192.6px;top:23.5px" width="14.4" height="13.5" viewBox="0 0 14.4 13.5" preserveAspectRatio="none"><path d="M0.5 0.5H5.5L7.5 2.5V9.5H0.5Z" fill="#fff" stroke="#444" stroke-width="1"/><path d="M5.5 4H10.8L13.9 7V13H5.5Z" fill="#fff" stroke="#444" stroke-width="1"/><path d="M2 4.5H5.2M2 6.5H5.2M7.3 8.5H12M7.3 10.5H12" stroke="#3b8fd6" stroke-width="0.9"/></svg>
<svg class="a" style="left:215px;top:23px" width="13" height="14" viewBox="0 0 13 14" preserveAspectRatio="none"><rect x="0.6" y="2" width="8.5" height="11" fill="#dedcd9" stroke="#c6c4c1" stroke-width="1"/><rect x="3" y="0.6" width="3.8" height="2.5" fill="#f0efed" stroke="#c6c4c1" stroke-width="0.8"/><path d="M6 6.5H10L12.4 9V13.4H6Z" fill="#e8e6e3" stroke="#c6c4c1" stroke-width="1"/></svg>
<svg class="a" style="left:233.40px;top:29.40px" width="5.2" height="3.2" viewBox="0 0 5.2 3.2"><path d="M0 0H5.2L2.6 3.2Z" fill="#c6c4c1"/></svg>
<div class="sep" style="left:243.10px;top:21px;height:20px"></div>
<svg class="a" style="left:251px;top:22.5px" width="10.5" height="14.3" viewBox="0 0 10.5 14.3" preserveAspectRatio="none"><rect x="4.2" y="0.5" width="2" height="5" rx="1" fill="none" stroke="#444" stroke-width="1"/><path d="M1.5 6H9V9H1.5Z" fill="#fff" stroke="#444" stroke-width="1"/><rect x="0.8" y="9" width="9" height="5" fill="#f2a33a"/><rect x="0.8" y="11" width="9" height="1" fill="#fff" opacity="0.6"/></svg>
<svg class="a" style="left:272px;top:23px" width="12.5" height="14" viewBox="0 0 12.5 14" preserveAspectRatio="none"><path d="M1 10L4.8 0.8H5.8L9.2 9M2.5 6.5H7.5" fill="none" stroke="#333" stroke-width="1"/><path d="M0 12.2H6" stroke="#3b8fd6" stroke-width="1"/><path d="M6.5 11L10 7.5L12.4 9.9L9 13.4Z" fill="#e03a3a"/></svg>
<div class="sep" style="left:292.10px;top:21px;height:20px"></div>
<svg class="a" style="left:298px;top:24px" width="12.6" height="12" viewBox="0 0 12.6 12" preserveAspectRatio="none"><path d="M3.5 1L0.8 4.2L3.5 7M1 4.2H7.5C10 4.2 11.8 6 11.8 8C11.8 10 10.3 11.3 8 11.5" fill="none" stroke="#c9c7c4" stroke-width="1"/></svg>
<svg class="a" style="left:316.80px;top:29.40px" width="5.2" height="3.2" viewBox="0 0 5.2 3.2"><path d="M0 0H5.2L2.6 3.2Z" fill="#c9c7c4"/></svg>
<svg class="a" style="left:328px;top:24px" width="12" height="12" viewBox="0 0 12 12" preserveAspectRatio="none"><path d="M9 1L11.4 4.2L9 7M11.2 4.2H4.8C2.2 4.2 0.6 6 0.6 8C0.6 10 2 11.3 4.3 11.5" fill="none" stroke="#c9c7c4" stroke-width="1"/></svg>
<svg class="a" style="left:346.15px;top:29.40px" width="5.2" height="3.2" viewBox="0 0 5.2 3.2"><path d="M0 0H5.2L2.6 3.2Z" fill="#c9c7c4"/></svg>
<div class="sep" style="left:355.20px;top:21px;height:20px"></div>
<svg class="a" style="left:363px;top:23px" width="14" height="14" viewBox="0 0 14 14" preserveAspectRatio="none"><circle cx="8.5" cy="5" r="4.2" fill="#fff" stroke="#333" stroke-width="1"/><path d="M5.6 8L0.8 12.6" stroke="#333" stroke-width="1.5"/><text x="6.6" y="7" font-size="6" fill="#3b8fd6" font-family="Liberation Sans">a</text><text x="10" y="13.5" font-size="6.5" fill="#333" font-family="Liberation Sans">d</text></svg>
<svg class="a" style="left:383.75px;top:22.5px" width="15" height="14.5" viewBox="0 0 15 14.5" preserveAspectRatio="none"><text x="0" y="6.5" font-size="7.4" fill="#444" font-family="Liberation Sans" font-weight="bold">abc</text><path d="M6 10.5L8.5 13L13.6 7.8" fill="none" stroke="#2ea55e" stroke-width="1.2"/></svg>
<div class="sep" style="left:405.20px;top:21px;height:20px"></div>
<svg class="a" style="left:410.6px;top:23.2px" width="14.5" height="14.5" viewBox="0 0 14.5 14.5" preserveAspectRatio="none"><rect x="0.5" y="0.5" width="13.5" height="13.5" fill="#fff" stroke="#444" stroke-width="1"/><rect x="1" y="4.8" width="12.5" height="3.6" fill="#5aa0e6"/><path d="M0.5 4.8H14M0.5 8.4H14M0.5 11.2H14M4.6 0.5V14M8.6 0.5V14M11.6 0.5V14" stroke="#444" stroke-width="0.8"/></svg>
<svg class="a" style="left:429.90px;top:29.40px" width="5.2" height="3.2" viewBox="0 0 5.2 3.2"><path d="M0 0H5.2L2.6 3.2Z" fill="#1a1a1a"/></svg>
<svg class="a" style="left:440px;top:23.2px" width="14.5" height="14.5" viewBox="0 0 14.5 14.5" preserveAspectRatio="none"><rect x="0.5" y="0.5" width="13.5" height="13.5" fill="#fff" stroke="#444" stroke-width="1"/><rect x="4.6" y="1" width="4" height="12.5" fill="#5aa0e6"/><path d="M0.5 4.8H14M0.5 8.4H14M0.5 11.2H14M4.6 0.5V14M8.6 0.5V14M11.6 0.5V14" stroke="#444" stroke-width="0.8"/></svg>
<svg class="a" style="left:459.30px;top:29.40px" width="5.2" height="3.2" viewBox="0 0 5.2 3.2"><path d="M0 0H5.2L2.6 3.2Z" fill="#1a1a1a"/></svg>
<div class="sep" style="left:469.00px;top:21px;height:20px"></div>
<svg class="a" style="left:475px;top:23px" width="14.8" height="14.5" viewBox="0 0 14.8 14.5" preserveAspectRatio="none"><rect x="0.5" y="0.5" width="13.8" height="13.5" fill="#fff" stroke="#444" stroke-width="1"/><rect x="0.5" y="0.5" width="13.8" height="1.6" fill="#444"/><path d="M7.4 2V14" stroke="#444" stroke-width="0.8"/><text x="1.6" y="8" font-size="5.6" fill="#3b8fd6" font-family="Liberation Sans">A</text><text x="1.6" y="13.3" font-size="5.6" fill="#c550c8" font-family="Liberation Sans">Z</text><text x="8.6" y="8" font-size="5.6" fill="#c550c8" font-family="Liberation Sans">Z</text><text x="8.6" y="13.3" font-size="5.6" fill="#3b8fd6" font-family="Liberation Sans">A</text></svg>
<svg class="a" style="left:497.5px;top:23px" width="15" height="14" viewBox="0 0 15 14" preserveAspectRatio="none"><text x="0" y="6.5" font-size="7" fill="#3b8fd6" font-family="Liberation Sans">A</text><text x="0.3" y="13.6" font-size="7" fill="#c550c8" font-family="Liberation Sans">Z</text><path d="M11.5 1.5V13M8.6 10L11.5 13.2L14.4 10" fill="none" stroke="#444" stroke-width="1"/></svg>
<svg class="a" style="left:520px;top:23px" width="14" height="14" viewBox="0 0 14 14" preserveAspectRatio="none"><text x="0.3" y="6.5" font-size="7" fill="#c550c8" font-family="Liberation Sans">Z</text><text x="0" y="13.6" font-size="7" fill="#3b8fd6" font-family="Liberation Sans">A</text><path d="M11 1.5V13M8.2 10L11 13.2L13.8 10" fill="none" stroke="#444" stroke-width="1"/></svg>
<svg class="a" style="left:542px;top:23px" width="13.6" height="14" viewBox="0 0 13.6 14" preserveAspectRatio="none"><path d="M0.6 1H12.6V2.5L8 7.5V12.5L5.5 11V7.5L0.6 2.5Z" fill="#fff" stroke="#444" stroke-width="1"/><path d="M9.5 6L7.5 10H9.5L8.6 13.6L12.4 8.6H10.4L11.4 6Z" fill="#f2a33a"/></svg>
<div class="sep" style="left:561.50px;top:21px;height:20px"></div>
<svg class="a" style="left:569px;top:23px" width="13.5" height="14" viewBox="0 0 13.5 14" preserveAspectRatio="none"><rect x="0.5" y="0.8" width="12.5" height="12.5" fill="#fff" stroke="#444" stroke-width="1"/><circle cx="3.5" cy="4" r="1.2" fill="#f2a33a"/><path d="M1 12.8L4.8 8L7 10L9.5 7L12.6 10.5V12.8Z" fill="#5aa0e6"/></svg>
<svg class="a" style="left:590.6px;top:23px" width="13.2" height="14" viewBox="0 0 13.2 14" preserveAspectRatio="none"><rect x="0.5" y="4.5" width="3" height="9" fill="#5aa0e6" stroke="#3b7fc0" stroke-width="0.6"/><rect x="5" y="0.5" width="3" height="13" fill="#f7c76b" stroke="#e0a040" stroke-width="0.6"/><rect x="9.6" y="6" width="3" height="7.5" fill="#666" stroke="#555" stroke-width="0.6"/></svg>
<svg class="a" style="left:613px;top:23px" width="13" height="14" viewBox="0 0 13 14" preserveAspectRatio="none"><rect x="0.5" y="0.8" width="12" height="12.5" fill="#fff" stroke="#555" stroke-width="1"/><rect x="1" y="1.3" width="11" height="1.8" fill="#bbb"/><rect x="1" y="1.3" width="1.8" height="11.5" fill="#bbb"/><path d="M4.5 11L10.5 5M8 4.6H10.8V7.4M4 8.6V11.4H6.8" fill="none" stroke="#3b8fd6" stroke-width="0.9"/></svg>
<div class="sep" style="left:632.60px;top:21px;height:20px"></div>
<svg class="a" style="left:638.75px;top:23.5px" width="13.8" height="13" viewBox="0 0 13.8 13" preserveAspectRatio="none"><path d="M1 12.4H5V10.8C2.5 9.8 1.2 7.8 1.2 5.6C1.2 2.8 3.8 0.6 6.9 0.6C10 0.6 12.6 2.8 12.6 5.6C12.6 7.8 11.3 9.8 8.8 10.8V12.4H12.8" fill="none" stroke="#444" stroke-width="1"/></svg>
<svg class="a" style="left:658.00px;top:29.40px" width="5.2" height="3.2" viewBox="0 0 5.2 3.2"><path d="M0 0H5.2L2.6 3.2Z" fill="#1a1a1a"/></svg>
<svg class="a" style="left:669.4px;top:23px" width="14.4" height="14" viewBox="0 0 14.4 14" preserveAspectRatio="none"><circle cx="6" cy="5.5" r="5" fill="#fff" stroke="#444" stroke-width="0.9"/><path d="M1 5.5H11M6 0.5C3.5 3 3.5 8 6 10.5M6 0.5C8.5 3 8.5 8 6 10.5M1.8 3H10.2M1.8 8H10.2" fill="none" stroke="#444" stroke-width="0.7"/><rect x="2.5" y="9.8" width="5" height="3.4" rx="1.7" fill="#fff" stroke="#3b8fd6" stroke-width="1"/><rect x="7.5" y="9.8" width="5.6" height="3.4" rx="1.7" fill="none" stroke="#3b8fd6" stroke-width="1"/></svg>
<svg class="a" style="left:691px;top:23px" width="14" height="14" viewBox="0 0 14 14" preserveAspectRatio="none"><path d="M0.6 1H13.4V9.5H5L2.5 12.5V9.5H0.6Z" fill="#fff" stroke="#444" stroke-width="1"/></svg>
<svg class="a" style="left:714.4px;top:23px" width="11.2" height="14" viewBox="0 0 11.2 14" preserveAspectRatio="none"><path d="M0.5 0.6H7.6L10.6 3.6V13.4H0.5Z" fill="#dcdad7" stroke="#d0cecb" stroke-width="0.8"/></svg>
<div class="sep" style="left:733.10px;top:21px;height:20px"></div>
<svg class="a" style="left:740px;top:23px" width="15" height="14.5" viewBox="0 0 15 14.5" preserveAspectRatio="none"><rect x="0.5" y="0.5" width="13" height="11" fill="#fff" stroke="#555" stroke-width="1"/><rect x="1" y="1" width="12" height="3.5" fill="#4a90d9"/><path d="M0.5 4.5H13.5M0.5 8H13.5M4.8 0.5V11.5M9.2 0.5V11.5" stroke="#555" stroke-width="0.7"/><rect x="7.5" y="8.5" width="7" height="3.5" rx="0.8" fill="#555"/><rect x="8.8" y="11.5" width="4.5" height="2.5" fill="#fff" stroke="#555" stroke-width="0.7"/></svg>
<svg class="a" style="left:761px;top:23px" width="14" height="14.5" viewBox="0 0 14 14.5" preserveAspectRatio="none"><rect x="0.5" y="0.5" width="13" height="13" fill="#fff" stroke="#555" stroke-width="1"/><rect x="1" y="1" width="12" height="3.5" fill="#3b82d6"/><rect x="1" y="1" width="4" height="12" fill="#3b82d6"/><path d="M0.5 4.5H13.5M0.5 8H13.5M0.5 11H13.5M5 0.5V13.5M9.2 0.5V13.5" stroke="#555" stroke-width="0.7"/></svg>
<svg class="a" style="left:780.15px;top:29.40px" width="5.2" height="3.2" viewBox="0 0 5.2 3.2"><path d="M0 0H5.2L2.6 3.2Z" fill="#1a1a1a"/></svg>
<svg class="a" style="left:791.9px;top:23px" width="13.1" height="14" viewBox="0 0 13.1 14" preserveAspectRatio="none"><rect x="0.5" y="0.5" width="12" height="13" fill="#fff" stroke="#555" stroke-width="1"/><rect x="0.5" y="0.5" width="12" height="2" fill="#555"/><path d="M1 7H12" stroke="#3b8fd6" stroke-width="1" stroke-dasharray="1.5 1"/></svg>
<div class="sep" style="left:812.10px;top:21px;height:20px"></div>
<svg class="a" style="left:818.75px;top:23px" width="14.4" height="14" viewBox="0 0 14.4 14" preserveAspectRatio="none"><rect x="0.6" y="5" width="7" height="7" fill="#fff" stroke="#444" stroke-width="1"/><circle cx="10" cy="4.4" r="3.8" fill="#fff" stroke="#444" stroke-width="1"/><path d="M4.5 8.5L8.8 4.2L13 8.5L8.8 12.8Z" fill="#fff" stroke="#444" stroke-width="1"/></svg>
<div class="a" style="left:3.3px;top:45.0px;width:135.7px;height:24.0px;background:#fff;border:1px solid #d8d6d3;border-radius:3px"></div>
<div class="a" style="left:116px;top:45.6px;width:22.40px;height:22.80px;background:#f1f0ee;border-left:1px solid #e2e0dd;border-radius:0 3px 3px 0"></div>
<svg class="a" style="left:124.00px;top:55.00px" width="7" height="4" viewBox="0 0 7 4"><path d="M0 0H7L3.5 4Z" fill="#222"/></svg>
<div class="a" style="left:9.2px;top:45.0px;height:24.0px;line-height:24.0px;font-size:9.6px;font-style:italic;color:#2a2a2a">Calibri</div>
<div class="a" style="left:145.6px;top:45.0px;width:67.0px;height:24.0px;background:#fff;border:1px solid #d8d6d3;border-radius:3px"></div>
<div class="a" style="left:189.6px;top:45.6px;width:22.40px;height:22.80px;background:#f1f0ee;border-left:1px solid #e2e0dd;border-radius:0 3px 3px 0"></div>
<svg class="a" style="left:197.60px;top:55.00px" width="7" height="4" viewBox="0 0 7 4"><path d="M0 0H7L3.5 4Z" fill="#222"/></svg>
<div class="a" style="left:152px;top:45.0px;height:24.0px;line-height:24.0px;font-size:9.6px;color:#2a2a2a">11 pt</div>
<div class="sep" style="left:215.20px;top:46px;height:22px"></div>
<div class="a" style="left:223.6px;top:49.6px;font-size:12.6px;font-weight:bold;color:#333;line-height:15px">B</div>
<div class="a" style="left:247.6px;top:49.6px;font-size:12.8px;font-family:'Liberation Serif';font-style:italic;color:#444;line-height:15px">I</div>
<div class="a" style="left:267px;top:49.4px;font-size:12px;color:#333;line-height:15px">U</div>
<div class="a" style="left:267.8px;top:62.8px;width:7.8px;height:1px;background:#3b8fd6"></div>
<svg class="a" style="left:284.10px;top:56.60px" width="5.2" height="3.2" viewBox="0 0 5.2 3.2"><path d="M0 0H5.2L2.6 3.2Z" fill="#1a1a1a"/></svg>
<div class="sep" style="left:294.60px;top:46px;height:22px"></div>
<div class="a" style="left:300.5px;top:49.5px;font-size:12px;color:#333;line-height:13px">A</div>
<div class="a" style="left:298px;top:61px;width:16.4px;height:3.6px;background:#c9211e"></div>
<svg class="a" style="left:318.40px;top:56.60px" width="5.2" height="3.2" viewBox="0 0 5.2 3.2"><path d="M0 0H5.2L2.6 3.2Z" fill="#1a1a1a"/></svg>
<svg class="a" style="left:328.5px;top:49.5px" width="11" height="10" viewBox="0 0 11 10" preserveAspectRatio="none"><path d="M3 9L1 4.5L6.5 1.5L9 6.5Z" fill="#fff" stroke="#444" stroke-width="0.9"/><path d="M0.6 2.5V6" stroke="#3b8fd6" stroke-width="1.2"/><path d="M6.5 1.5L8 0.5" stroke="#444" stroke-width="0.8"/></svg>
<div class="a" style="left:328px;top:61px;width:16.4px;height:3.6px;background:#f5ef1a"></div>
<svg class="a" style="left:348.40px;top:56.60px" width="5.2" height="3.2" viewBox="0 0 5.2 3.2"><path d="M0 0H5.2L2.6 3.2Z" fill="#1a1a1a"/></svg>
<div class="sep" style="left:357.60px;top:46px;height:22px"></div>
<svg class="a" style="left:365.6px;top:50px" width="12" height="14" viewBox="0 0 12 14" preserveAspectRatio="none"><path d="M0 1H12M0 3.7H8M0 6.4H12M0 9.1H12M0 11.8H8" stroke="#444" stroke-width="1"/></svg>
<svg class="a" style="left:387.75px;top:50px" width="12" height="14" viewBox="0 0 12 14" preserveAspectRatio="none"><path d="M0 1H12M2 3.7H10M0 6.4H12M0 9.1H12M2 11.8H10" stroke="#444" stroke-width="1"/></svg>
<svg class="a" style="left:409.4px;top:50px" width="12.5" height="14" viewBox="0 0 12.5 14" preserveAspectRatio="none"><path d="M0.5 1H12.5M4.5 3.7H12.5M0.5 6.4H12.5M0.5 9.1H12.5M4.5 11.8H12.5" stroke="#444" stroke-width="1"/></svg>
<div class="sep" style="left:428.35px;top:46px;height:22px"></div>
<svg class="a" style="left:437px;top:50px" width="12" height="14" viewBox="0 0 12 14" preserveAspectRatio="none"><path d="M0 0.8H12M0 3.5H8M0 6.2H12" stroke="#444" stroke-width="1"/><path d="M6 13.5V8M3.8 10L6 7.8L8.2 10" fill="none" stroke="#3b8fd6" stroke-width="1"/></svg>
<svg class="a" style="left:458.75px;top:49.5px" width="12" height="14.5" viewBox="0 0 12 14.5" preserveAspectRatio="none"><path d="M0 6.5H12M1 8.3H11" stroke="#444" stroke-width="1"/><path d="M6 0V5M3.8 3L6 5.2L8.2 3M6 14V9.5M3.8 11.5L6 9.3L8.2 11.5" fill="none" stroke="#3b8fd6" stroke-width="1"/></svg>
<div class="a" style="left:475px;top:45px;width:21.9px;height:24.4px;background:#d9d7d4;border-radius:3px"></div>
<svg class="a" style="left:480px;top:49.5px" width="12" height="14" viewBox="0 0 12 14" preserveAspectRatio="none"><path d="M6 0V6M3.8 4L6 6.2L8.2 4" fill="none" stroke="#3b8fd6" stroke-width="1"/><path d="M1 8.2H8M0 10.8H12M0 13.4H8" stroke="#444" stroke-width="1"/></svg>
<div class="sep" style="left:500.20px;top:46px;height:22px"></div>
<svg class="a" style="left:507.5px;top:50px" width="13.1" height="14" viewBox="0 0 13.1 14" preserveAspectRatio="none"><path d="M0 1H10.5M0 3.7H7.5M0 6.4H8M0 12.6H10.5" stroke="#444" stroke-width="1"/><path d="M8 6.4H10.5C12 6.4 12.4 7.5 12.4 8.5C12.4 9.5 11.5 10.3 10 10.3M11.2 8.8L9.6 10.3L11.2 11.8" fill="none" stroke="#3b8fd6" stroke-width="1"/></svg>
<div class="sep" style="left:527.10px;top:46px;height:22px"></div>
<svg class="a" style="left:534px;top:50px" width="13.8" height="14" viewBox="0 0 13.8 14" preserveAspectRatio="none"><rect x="0.5" y="0.5" width="12.8" height="13" fill="#e9e8e6" stroke="#c9c7c4" stroke-width="1"/><path d="M0.5 4.7H13.3M0.5 9.2H13.3M4.6 0.5V4.7M9 0.5V4.7M4.6 9.2V13.5M9 9.2V13.5" stroke="#c9c7c4" stroke-width="0.8"/></svg>
<svg class="a" style="left:556.25px;top:50px" width="13.8" height="14" viewBox="0 0 13.8 14" preserveAspectRatio="none"><rect x="0.5" y="0.5" width="12.8" height="13" fill="#e9e8e6" stroke="#c9c7c4" stroke-width="1"/><path d="M0.5 4.7H13.3M0.5 9.2H13.3M4.6 0.5V4.7M9 0.5V4.7M4.6 9.2V13.5M9 9.2V13.5" stroke="#c9c7c4" stroke-width="0.8"/></svg>
<svg class="a" style="left:578px;top:50px" width="13.9" height="14" viewBox="0 0 13.9 14" preserveAspectRatio="none"><rect x="0.5" y="0.5" width="12.8" height="13" fill="#e9e8e6" stroke="#c9c7c4" stroke-width="1"/><path d="M0.5 4.7H13.3M0.5 9.2H13.3M4.6 0.5V13.5M9 0.5V13.5" stroke="#c9c7c4" stroke-width="0.8"/></svg>
<div class="sep" style="left:597.60px;top:46px;height:22px"></div>
<svg class="a" style="left:603px;top:51px" width="15.5" height="12" viewBox="0 0 15.5 12" preserveAspectRatio="none"><rect x="0.5" y="0.5" width="14" height="9" fill="#fff" stroke="#444" stroke-width="1" stroke-dasharray="9 3"/><circle cx="7" cy="5" r="1.4" fill="#444"/><rect x="4" y="7.5" width="2.6" height="4" fill="#444"/><rect x="7.5" y="6.8" width="2.6" height="4.7" fill="#444"/><rect x="11" y="6" width="2.6" height="5.5" fill="#444"/></svg>
<svg class="a" style="left:623.40px;top:56.60px" width="5.2" height="3.2" viewBox="0 0 5.2 3.2"><path d="M0 0H5.2L2.6 3.2Z" fill="#1a1a1a"/></svg>
<div class="a" style="left:635px;top:49px;font-size:15px;color:#444;line-height:16px;-webkit-text-stroke-width:0;transform:scaleX(0.85);transform-origin:0 0">%</div>
<div class="a" style="left:655.5px;top:49px;font-size:14.5px;color:#555;line-height:16px;letter-spacing:-1.6px;-webkit-text-stroke-width:0;transform:scaleX(0.8);transform-origin:0 0">0.0</div>
<svg class="a" style="left:678.75px;top:50px" width="13.3" height="14" viewBox="0 0 13.3 14" preserveAspectRatio="none"><rect x="0.5" y="2" width="12.3" height="11.5" fill="#fff" stroke="#444" stroke-width="1"/><path d="M0.5 4H12.8M3 0.5V3M10.3 0.5V3" stroke="#444" stroke-width="1"/><text x="3.8" y="12" font-size="7.5" fill="#444" font-family="Liberation Sans">7</text></svg>
<div class="sep" style="left:698.35px;top:46px;height:22px"></div>
<svg class="a" style="left:705px;top:50px" width="15" height="14" viewBox="0 0 15 14" preserveAspectRatio="none"><text x="-0.5" y="10" font-size="11" fill="#444" font-family="Liberation Sans" letter-spacing="-1.5">.00</text><path d="M11.4 9V14M9 11.5H13.8" stroke="#3b8fd6" stroke-width="1"/></svg>
<svg class="a" style="left:726px;top:50px" width="15.9" height="14" viewBox="0 0 15.9 14" preserveAspectRatio="none"><text x="-0.5" y="10" font-size="11" fill="#444" font-family="Liberation Sans" letter-spacing="-1.5">.00</text><path d="M10 9L14 13.5M14 9L10 13.5" stroke="#e04040" stroke-width="1"/></svg>
<div class="sep" style="left:748.10px;top:46px;height:22px"></div>
<svg class="a" style="left:755px;top:50px" width="14" height="14" viewBox="0 0 14 14" preserveAspectRatio="none"><path d="M2.5 1H14M7 4.3H14M7 7.6H14M7 10.9H14M2.5 13.6H14" stroke="#444" stroke-width="1"/><path d="M0 7.6H5.5M3.5 5.5L5.6 7.6L3.5 9.7" fill="none" stroke="#3b8fd6" stroke-width="1"/></svg>
<svg class="a" style="left:776px;top:50px" width="15" height="14" viewBox="0 0 15 14" preserveAspectRatio="none"><path d="M3.5 1H15M8 4.3H15M8 7.6H15M8 10.9H15M3.5 13.6H15" stroke="#444" stroke-width="1"/><path d="M6.5 7.6H0.6M2.6 5.5L0.5 7.6L2.6 9.7" fill="none" stroke="#3b8fd6" stroke-width="1"/></svg>
<div class="sep" style="left:797.10px;top:46px;height:22px"></div>
<svg class="a" style="left:803px;top:50.5px" width="13" height="13.2" viewBox="0 0 13 13.2" preserveAspectRatio="none"><path d="M0.5 0.5H12.5V12.7H0.5Z M6.5 0.5V12.7M0.5 6.6H12.5" fill="none" stroke="#444" stroke-width="1"/><path d="M0.5 12.7H12.5" stroke="#f2a33a" stroke-width="1"/></svg>
<svg class="a" style="left:822.15px;top:56.60px" width="5.2" height="3.2" viewBox="0 0 5.2 3.2"><path d="M0 0H5.2L2.6 3.2Z" fill="#1a1a1a"/></svg>
<svg class="a" style="left:832.75px;top:50.5px" width="12.3" height="13" viewBox="0 0 12.3 13" preserveAspectRatio="none"><path d="M0 1H12.3M0 4.5H12.3" stroke="#bdbbb8" stroke-width="1.4"/><path d="M0 8H12.3" stroke="#bdbbb8" stroke-width="0.9" stroke-dasharray="2.5 1"/><path d="M0 11.5H12.3" stroke="#bdbbb8" stroke-width="0.9" stroke-dasharray="1.2 1"/></svg>
<svg class="a" style="left:851.40px;top:56.60px" width="5.2" height="3.2" viewBox="0 0 5.2 3.2"><path d="M0 0H5.2L2.6 3.2Z" fill="#c6c4c1"/></svg>
<svg class="a" style="left:860px;top:50px" width="16" height="14" viewBox="0 0 16 14" preserveAspectRatio="none"><rect x="2" y="0.8" width="12" height="9.5" fill="#fff" stroke="#3b8fd6" stroke-width="1.2"/><rect x="3" y="1.8" width="10" height="7.5" fill="#fff" stroke="#444" stroke-width="0.8"/><rect x="0" y="10.8" width="16" height="3" fill="#1d66b4"/></svg>
<svg class="a" style="left:880.40px;top:56.60px" width="5.2" height="3.2" viewBox="0 0 5.2 3.2"><path d="M0 0H5.2L2.6 3.2Z" fill="#1a1a1a"/></svg>
<div class="sep" style="left:890.10px;top:46px;height:22px"></div>
<svg class="a" style="left:896px;top:50px" width="14" height="14" viewBox="0 0 14 14" preserveAspectRatio="none"><rect x="0.5" y="0.5" width="11" height="11" fill="#fff" stroke="#555" stroke-width="0.9"/><rect x="1" y="1" width="10" height="2.5" fill="#7fcf8f"/><rect x="1" y="4" width="10" height="2.5" fill="#f08a8a"/><rect x="6.5" y="7" width="7" height="6.5" fill="#fff" stroke="#444" stroke-width="0.9"/><path d="M8 9.3H12M8 11.2H12M11 8L9 12.5" stroke="#444" stroke-width="0.7"/></svg>
<svg class="a" style="left:914.90px;top:56.60px" width="5.2" height="3.2" viewBox="0 0 5.2 3.2"><path d="M0 0H5.2L2.6 3.2Z" fill="#1a1a1a"/></svg>
<div class="a" style="left:927.5px;top:45px;width:21.5px;height:24.7px;background:#d9d7d4;border-radius:3px"></div>
<svg class="a" style="left:932px;top:50px" width="13" height="14" viewBox="0 0 13 14" preserveAspectRatio="none"><path d="M7 1H12.5M8 1V13.5M10.5 1V13.5M8 1C5 1 4 2.5 4 4C4 5.5 5 7 8 7" fill="#444" stroke="#444" stroke-width="0.9"/><path d="M0.5 10.5H5M3.2 8.6L5.2 10.5L3.2 12.4" fill="none" stroke="#3b8fd6" stroke-width="1"/></svg>
<svg class="a" style="left:954px;top:50px" width="13.5" height="14" viewBox="0 0 13.5 14" preserveAspectRatio="none"><path d="M3 1H8.5M4.5 1V13.5M7 1V13.5M4.5 1C1.5 1 0.5 2.5 0.5 4C0.5 5.5 1.5 7 4.5 7" fill="#888" stroke="#888" stroke-width="0.9"/><path d="M13 10.5H8.5M10.3 8.6L8.3 10.5L10.3 12.4" fill="none" stroke="#3b8fd6" stroke-width="1"/></svg>
<div class="sep" style="left:974.30px;top:46px;height:22px"></div>
<div class="a" style="left:977px;top:45px;width:21px;height:24.7px;background:#d9d7d4;border-radius:3px"></div>
<svg class="a" style="left:980.5px;top:50px" width="14" height="14" viewBox="0 0 14 14" preserveAspectRatio="none"><text x="0" y="8" font-size="8.6" fill="#3b8fd6" font-family="Liberation Sans">A</text><path d="M7.5 2H12.5M11 0.5L12.7 2L11 3.5M7.5 5H12.5M11 3.5L12.7 5L11 6.5M0.5 12H13.2M11.5 10.3L13.3 12L11.5 13.7" fill="none" stroke="#444" stroke-width="0.8"/></svg>
<svg class="a" style="left:1001.7px;top:50px" width="15" height="14" viewBox="0 0 15 14" preserveAspectRatio="none"><text x="6" y="8" font-size="8.6" fill="#3b8fd6" font-family="Liberation Sans">A</text><path d="M1.5 0.5V13M0 11.3L1.5 13L3 11.3M6 8V13M4.5 11.3L6 13L7.5 11.3M10 8V13M8.5 11.3L10 13L11.5 11.3M13.5 8V13M12 11.3L13.5 13L15 11.3M5.5 0.5V7" fill="none" stroke="#444" stroke-width="0.8"/></svg>
<div class="a" style="left:3.3px;top:72.2px;width:106.7px;height:23.39999999999999px;background:#fff;border:1px solid #d8d6d3;border-radius:3px"></div>
<div class="a" style="left:86px;top:72.8px;width:23.40px;height:22.20px;background:#f1f0ee;border-left:1px solid #e2e0dd;border-radius:0 3px 3px 0"></div>
<svg class="a" style="left:94.50px;top:81.90px" width="7" height="4" viewBox="0 0 7 4"><path d="M0 0H7L3.5 4Z" fill="#222"/></svg>
<div class="a" style="left:8.6px;top:72.2px;height:23.39999999999999px;line-height:23.39999999999999px;font-size:9.6px;color:#2a2a2a">A1</div>
<div class="sep" style="left:112.60px;top:74px;height:20px"></div>
<svg class="a" style="left:119px;top:77.5px" width="10.5" height="13" viewBox="0 0 10.5 13" preserveAspectRatio="none"><path d="M5 1C4 0.5 3.1 1 2.9 2.2L1.3 11.4C1 12.3 0.5 12.6 0 12.3M1.4 4.6H4.2" fill="none" stroke="#3b8fd6" stroke-width="1"/><path d="M5.3 5.4C6.1 5.2 6.5 5.7 6.7 6.7L7.6 10.4C7.8 11.2 8.3 11.5 9 11.1M9.9 5.5C9 5.4 8.2 6.2 7.3 7.8L5.7 10.4C5.2 11.2 4.7 11.4 4 11.2" fill="none" stroke="#3b8fd6" stroke-width="1"/></svg>
<div class="a" style="left:134.5px;top:76.5px;font-size:13px;font-family:'Liberation Serif';color:#555;line-height:14px;-webkit-text-stroke-width:0">∑</div>
<svg class="a" style="left:149.30px;top:83.40px" width="5.2" height="3.2" viewBox="0 0 5.2 3.2"><path d="M0 0H5.2L2.6 3.2Z" fill="#1a1a1a"/></svg>
<div class="a" style="left:160.7px;top:82.3px;width:8.3px;height:1.4px;background:#555"></div><div class="a" style="left:160.7px;top:86.3px;width:8.3px;height:1.4px;background:#555"></div>
<div class="a" style="left:173.3px;top:76.4px;width:972.1px;height:16px;background:#fff;border:1px solid #d8d6d3;border-radius:2px"></div>
<svg class="a" style="left:1148.50px;top:82.50px" width="7" height="4" viewBox="0 0 7 4"><path d="M0 0H7L3.5 4Z" fill="#222"/></svg>
<div class="a" style="left:1177px;top:80.6px;width:9px;height:1.3px;background:#333"></div><div class="a" style="left:1177px;top:84.2px;width:9px;height:1.3px;background:#333"></div><div class="a" style="left:1177px;top:87.8px;width:9px;height:1.3px;background:#333"></div>
<svg class="a" style="left:1174.4px;top:108px" width="14.2" height="13.5" viewBox="0 0 14.2 13.5" preserveAspectRatio="none"><rect x="0.6" y="0.6" width="13" height="12.3" fill="#fff" stroke="#444" stroke-width="1"/><rect x="0.6" y="0.6" width="13" height="1.8" fill="#444"/><path d="M3 6H11M3 9H11" stroke="#3b8fd6" stroke-width="0.9"/><path d="M8.5 4.8V7.2M5.5 7.8V10.2" stroke="#3b8fd6" stroke-width="0.9"/></svg>
<svg class="a" style="left:1174.4px;top:136.5px" width="14.2" height="15.5" viewBox="0 0 14.2 15.5" preserveAspectRatio="none"><path d="M0.6 10.5L4.6 0.6H5.6L9.2 9M2.2 6.8H7.6" fill="none" stroke="#333" stroke-width="1.1"/><path d="M0.3 12.2H5" stroke="#333" stroke-width="1"/><path d="M13.4 4.6C12.8 4 12 4.3 11.2 5.2L8 9.2L9.4 10.4L12.9 6.6C13.7 5.8 13.9 5.1 13.4 4.6Z" fill="#fff" stroke="#444" stroke-width="0.9"/><path d="M7.8 9.6C6.4 9.8 5.8 11 5.6 14.6C8.4 14 9.6 12.8 9.4 10.8Z" fill="#3b8fd6"/></svg>
<svg class="a" style="left:1174.4px;top:165px" width="14.2" height="15.4" viewBox="0 0 14.2 15.4" preserveAspectRatio="none"><path d="M0.6 1H5L6.5 2.5H12V6H0.6Z" fill="#fbe0a8" stroke="#eea04a" stroke-width="1"/><path d="M0.6 4H12V12.5H0.6Z" fill="#f8cf82" stroke="#eea04a" stroke-width="1"/><rect x="5" y="6.5" width="8.5" height="8.3" fill="#fff" stroke="#444" stroke-width="0.9"/><path d="M5.5 14.5L8 11.5L10 13L11.5 11.5L13.5 13.5V14.5Z" fill="#3b8fd6"/></svg>
<svg class="a" style="left:1174.4px;top:194.6px" width="14.2" height="14.2" viewBox="0 0 14.2 14.2" preserveAspectRatio="none"><circle cx="7.1" cy="7.1" r="6.4" fill="none" stroke="#444" stroke-width="1"/><path d="M10 4.2L8 8L4.2 10L6.2 6.2Z" fill="#3b8fd6"/></svg>
<svg class="a" style="left:1175px;top:223.5px" width="13" height="15" viewBox="0 0 13 15" preserveAspectRatio="none"><path d="M6.2 1.2C5 0.6 3.9 1.2 3.6 2.6L1.6 13.2C1.3 14.3 0.6 14.6 0 14.3M1.8 5.2H5.2" fill="none" stroke="#3b8fd6" stroke-width="1.1"/><path d="M6.6 6.2C7.6 6 8 6.6 8.3 7.8L9.4 12C9.7 13 10.3 13.3 11.2 12.8M12.2 6.3C11.2 6.2 10.2 7.2 9 9L7 12C6.4 12.9 5.8 13.2 5 12.9" fill="none" stroke="#3b8fd6" stroke-width="1.1"/></svg>
</div></body></html>
